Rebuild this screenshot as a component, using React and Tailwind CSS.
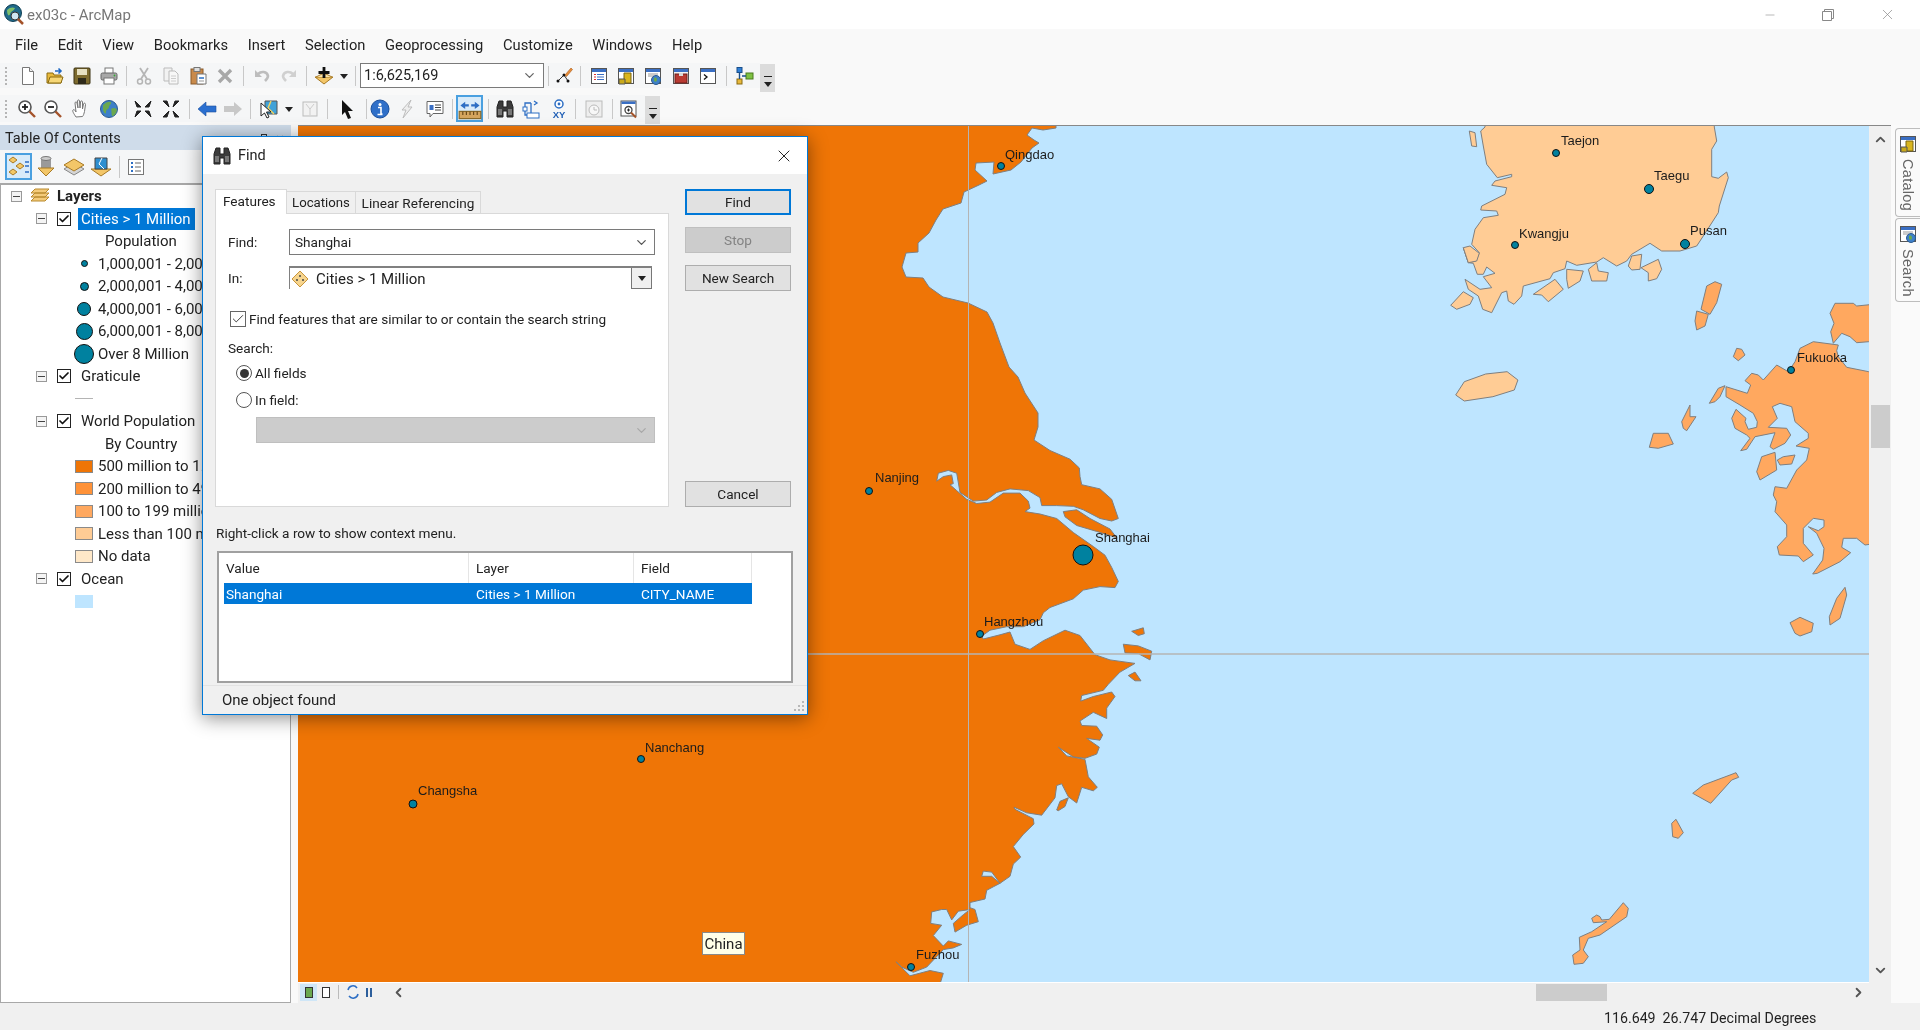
import React from 'react';
import { ChevronDown, ChevronLeft, ChevronRight, ChevronUp, Minus, X, Check } from 'lucide-react';

const P = (a, ox = 0, oy = 0, sx = 1, sy = 1) => {
  const o = [];
  for (let i = 0; i < a.length; i += 2) o.push(`${(ox + a[i] / sx).toFixed(1)},${(oy + a[i + 1] / sy).toFixed(1)}`);
  return o.join(' ');
};

const chinaNorth = [1056,118,1056,128,1043,130,1032,128,1027,135,1034,140,1039,143,1032,148,1021,162,1011,170,993,174,994,162,976,163,975,170,987,181,979,185,964,192,961,203,943,209,936,220,929,233,918,243,918,252,906,253,902,267,906,277,923,278,929,287,943,297,968,303,987,312,993,323,1000,343,1009,367,1018,377,1025,393,1038,413,1038,427,1034,440];
const chinaSouth = [720,30,780,55,808,80,810,105,815,128,870,140,905,170,925,225,905,232,870,225,820,200,790,190,740,188,695,188,690,165,655,145,600,140,560,150,530,172,490,175,450,150,440,95,415,87,385,95,380,118,400,105,425,100,430,125,420,128,440,145,470,170,500,182,540,178,580,152,630,152,655,175,660,195,645,205,690,212,740,225,790,265,850,305,885,330,905,365,925,405,915,423,870,420,820,430,790,455,720,480,700,495,690,515,640,535,590,535,540,545,515,562,520,570,570,558,600,550,615,585,660,600,700,575,765,545,810,560,855,615,900,630,975,640,930,665,895,700,880,717,815,732,812,748,850,735,905,722,915,735,890,768,890,798,850,780,810,805,815,818,860,820,878,845,870,860,830,855,868,880,860,900,825,912,790,908,745,880,770,905,825,915,835,965,862,995,850,1005,815,995,800,1040,775,1022,755,985,740,990,735,1025,695,1075,650,1068,612,1052,615,1058,670,1085,672,1100,640,1130,610,1165,632,1195,610,1215,600,1250,570,1270,545,1238,520,1235,515,1250,545,1250,570,1270,550,1280,530,1290,525,1315,480,1325,480,1340,495,1345,505,1380,470,1390,435,1410,430,1385,460,1360,480,1345,445,1350,425,1375,410,1345,395,1345,365,1352,362,1385,395,1390,370,1420,400,1450,415,1435,455,1445,430,1455,400,1460,350,1510,310,1525,275,1510,258,1495,300,1535,360,1520,400,1528,385,1575];
const chinaCorners = [280,990,280,118];

const z12 = [
  [760,205,800,200,840,225,900,255,920,280,860,262,800,245,765,220],
  [965,548,1000,538,1003,555,985,560],
  [940,585,985,590,1025,605,1020,630,985,612,945,610],
  [955,675,975,665,993,690,975,690],
  [740,1060,750,1035,775,1025,765,1050,745,1062],
];

const korea = [135,-20,135,3,122,15,130,60,140,115,172,155,215,145,215,152,165,165,155,178,200,185,195,205,125,240,122,252,170,255,175,268,130,275,105,310,95,355,118,380,108,405,85,410,70,365,85,410,100,412,112,445,130,445,140,423,165,442,130,452,155,485,120,490,75,460,85,490,115,510,128,550,155,560,185,500,200,495,205,525,222,535,245,510,250,480,330,458,340,440,375,428,380,405,410,418,470,408,490,395,530,420,560,405,575,385,630,352,665,375,720,375,770,360,790,330,835,260,838,240,865,155,860,138,835,157,815,152,815,70,830,45,823,3,823,-20];
const koreaIs = [
  [88,15,105,20,110,62,95,60],
  [70,365,90,360,118,382,110,405,85,410],
  [32,538,70,497,100,515,90,535,50,550],
  [280,505,345,460,370,490,325,527,305,507],
  [380,430,430,435,420,465,385,487,380,460],
  [445,430,470,410,475,435,505,440,500,465,455,465],
  [575,390,605,385,600,430,575,432,565,420],
  [603,425,655,400,665,430,650,458,625,465,625,440],
];
const tsushima = [
  [800,480,825,467,845,475,830,530,810,565,783,550],
  [770,555,805,565,795,600,770,612,765,585],
];
const kyushu = [710,245,686,245,620,232,595,200,590,182,595,165,520,155,480,175,465,215,445,245,410,225,370,270,355,255,335,250,315,272,332,285,322,310,258,290,258,320,300,345,340,370,352,395,350,412,325,418,315,395,318,385,288,358,275,385,285,415,320,435,330,445,302,482,320,478,345,440,405,428,390,470,400,478,435,460,452,435,440,415,385,412,412,385,397,350,420,340,455,350,465,395,505,430,505,445,468,468,508,475,500,510,470,540,440,595,405,590,400,615,410,635,405,665,440,705,440,740,412,770,418,795,475,798,490,815,520,795,490,760,490,715,520,685,552,690,552,710,535,722,505,710,530,730,552,775,548,810,518,852,532,850,600,815,632,788,605,772,610,745,650,745,675,765,710,760];
const japanIs = [
  [710,155,686,155,650,158,630,140,605,130,580,160,572,125,582,100,570,70,585,40,640,40,650,48,710,42],
  [280,200,290,175,305,178,315,195,295,212],
  [208,340,235,295,255,287,240,320,225,335],
  [125,395,150,345,150,380,168,380,140,422,130,415],
  [28,472,40,430,85,430,100,462,55,475],
  [350,545,365,500,405,487,410,540,360,570],
  [412,510,430,500,465,495,455,522,420,525],
  [568,980,590,925,615,892,620,915,600,985,570,1005],
  [450,998,480,982,520,1000,515,1025,480,1038,465,1030],
];
const south = [
  [578,280,610,255,690,225,708,218,716,232,695,240,632,310],
  [515,370,528,358,550,398,535,415,518,410],
  [238,712,275,695,320,665,280,668,275,655,290,645,300,650,305,660,328,658,370,608,385,625,380,650,300,705,265,715,250,750,265,770,250,790,222,793,218,765,240,750],
];
const jeju = [918,825,930,785,960,762,990,755,1005,780,1000,810,970,830,930,843];

const cities = [
  ['Qingdao', 1005, 159, 1001, 166, 3.5], ['Taejon', 1561, 145, 1556, 153, 3.5], ['Taegu', 1654, 180, 1649, 189, 4.5],
  ['Kwangju', 1519, 238, 1515, 245, 3.5], ['Pusan', 1690, 235, 1685, 244, 4.5], ['Fukuoka', 1797, 362, 1791, 370, 3.5],
  ['Nanjing', 875, 482, 869, 491, 3.5], ['Shanghai', 1095, 542, 1083, 555, 10], ['Hangzhou', 984, 626, 980, 634, 3.5],
  ['Nanchang', 645, 752, 641, 759, 3.5], ['Changsha', 418, 795, 413, 804, 4], ['Fuzhou', 916, 959, 911, 967, 3.5],
];

function MapView() {
  const line = { stroke: '#7f7f7f', strokeWidth: 1, strokeLinejoin: 'round' };
  return (
    <svg viewBox="298 126 1571 856" className="w-full h-full block bg-[#bee5ff]">
      <polygon points={`${P(chinaNorth)} ${P(chinaSouth, 810, 440, 3, 2.865)} ${P(chinaCorners)}`} fill="#ef7506" {...line} />
      {z12.map((p, i) => <polygon key={i} points={P(p, 810, 440, 3, 2.865)} fill="#ef7506" {...line} />)}
      <polygon points={P(korea, 1440, 126, 3, 3)} fill="#ffcc95" {...line} />
      {koreaIs.map((p, i) => <polygon key={i} points={P(p, 1440, 126, 3, 3)} fill="#ffcc95" {...line} />)}
      <polygon points={P(jeju, 800, 120, 1.4, 3)} fill="#ffcc95" {...line} />
      {tsushima.map((p, i) => <polygon key={i} points={P(p, 1440, 126, 3, 3)} fill="#ffa85f" {...line} />)}
      <polygon points={P(kyushu, 1640, 290, 3, 3)} fill="#ffa85f" {...line} />
      {japanIs.map((p, i) => <polygon key={i} points={P(p, 1640, 290, 3, 3)} fill="#ffa85f" {...line} />)}
      {south.map((p, i) => <polygon key={i} points={P(p, 1500, 700, 3, 3)} fill="#ffa85f" {...line} />)}
      <line x1="968.5" y1="126" x2="968.5" y2="982" stroke="#b4b4b4" strokeWidth="1" />
      <line x1="298" y1="654" x2="1869" y2="654" stroke="#b4b4b4" strokeWidth="1.3" />
      {cities.map(([n, tx, ty, cx, cy, r]) => (
        <g key={n}>
          <circle cx={cx} cy={cy} r={r} fill="#00819f" stroke="#111" strokeWidth="1" />
          <text x={tx} y={ty} fontSize="13" fill="#1c1c1c" fontFamily="'Liberation Sans', sans-serif">{n}</text>
        </g>
      ))}
    </svg>
  );
}

const I = ({ children, s = 20 }) => <svg width={s} height={s} viewBox="0 0 20 20" className="shrink-0">{children}</svg>;
const Zoomer = ({ plus }) => (
  <I>
    <circle cx="8" cy="8" r="6" fill="#fff" stroke="#555" strokeWidth="1.6" />
    <path d="M5 8h6" stroke="#222" strokeWidth="1.8" />
    {plus && <path d="M8 5v6" stroke="#222" strokeWidth="1.8" />}
    <path d="M12.5 12.5l5.5 5.5" stroke="#a4532a" strokeWidth="2.4" />
  </I>
);
const WinIcon = ({ children }) => (
  <I>
    <rect x="2.5" y="2.5" width="15" height="15" fill="#fff" stroke="#555" />
    <rect x="3" y="3" width="14" height="3" fill="#3a6fc4" />
    {children}
  </I>
);
const Globe = () => (
  <I>
    <circle cx="10" cy="10" r="8.5" fill="#3d7fc8" stroke="#2a5a90" />
    <path d="M4 6c3-3 6-4 8-3 1 2-2 3-2 5s-3 2-3 5-2 1-3-2zM12 10c3-2 5-1 6 1-1 4-3 6-5 6-1-3 0-4-1-7z" fill="#6aa84f" />
  </I>
);
const Diamond = ({ s = 20 }) => (
  <I s={s}>
    <path d="M10 2l8 8-8 8-8-8z" fill="#f7d58e" stroke="#c9953b" />
    <circle cx="10" cy="7" r="1" fill="#444" /><circle cx="7" cy="11" r="1" fill="#444" /><circle cx="13" cy="11" r="1" fill="#444" />
  </I>
);

const icons = {
  new: <I><path d="M4.5 1.5h7l4 4v13h-11z" fill="#fff" stroke="#777" /><path d="M11.5 1.5v4h4" fill="#eee" stroke="#777" /></I>,
  open: <I><path d="M2 7h6l1 2h7v8H2z" fill="#e8b93c" stroke="#8a6a10" /><path d="M3 17l2-6h13l-2 6z" fill="#f6d777" stroke="#8a6a10" /><path d="M10 5h6M13.5 2.5L16 5l-2.500 2.500" fill="none" stroke="#1f68c4" strokeWidth="1.600" /></I>,
  save: <I><rect x="2" y="2" width="16" height="16" rx="1" fill="#7d6b2f" stroke="#3c3312" /><rect x="5" y="3" width="10" height="6" fill="#e6e0c2" /><rect x="6" y="12" width="8" height="6" fill="#2e2a1a" /></I>,
  print: <I><rect x="6" y="2" width="8" height="6" fill="#fff" stroke="#777" /><rect x="2" y="7" width="16" height="7" rx="1.500" fill="#a8a8a8" stroke="#666" /><rect x="5" y="12" width="10" height="6" fill="#fff" stroke="#777" /><circle cx="15.500" cy="9.500" r="0.900" fill="#3a3" /></I>,
  cut: <I><path d="M6 2l7 11M14 2L7 13" stroke="#b5b5b5" strokeWidth="1.800" /><circle cx="6" cy="15.500" r="2.500" fill="none" stroke="#b5b5b5" strokeWidth="1.500" /><circle cx="14" cy="15.500" r="2.500" fill="none" stroke="#b5b5b5" strokeWidth="1.500" /></I>,
  copy: <I><path d="M3 2h8v13H3z" fill="#f2f2f2" stroke="#bbb" /><path d="M8 5h6l3 3v10H8z" fill="#f7f7f7" stroke="#bbb" /><path d="M10 10h5M10 12.500h5M10 15h5" stroke="#ccc" /></I>,
  paste: <I><rect x="3" y="3" width="12" height="15" fill="#c98a4b" stroke="#8a5a2a" /><rect x="6" y="1.500" width="6" height="4" fill="#ddd" stroke="#777" /><path d="M9 8h9v10H9z" fill="#fff" stroke="#777" /><path d="M11 12h5" stroke="#2a6fc4" strokeWidth="1.500" /><path d="M11 15h5" stroke="#999" /></I>,
  del: <I><path d="M4 4l12 12M16 4L4 16" stroke="#a8a8a8" strokeWidth="3.400" /></I>,
  undo: <I><path d="M6 8c3-3 9-3 10 2 0 2-1 3-3 5" fill="none" stroke="#bdbdbd" strokeWidth="2.600" /><path d="M3 4v7h7z" fill="#bdbdbd" /></I>,
  redo: <I><path d="M14 8c-3-3-9-3-10 2 0 2 1 3 3 5" fill="none" stroke="#d0d0d0" strokeWidth="2.600" /><path d="M17 4v7h-7z" fill="#d0d0d0" /></I>,
  add: <I><path d="M10 18l-9-7h18z" fill="#f3c668" stroke="#a87a25" /><path d="M2 11l8-4 8 4" fill="#fae4ad" stroke="#a87a25" /><path d="M10 1v11M4.500 6.500h11" stroke="#111" strokeWidth="2.800" /></I>,
  edit: <I><path d="M4 15l6-6 4 6" fill="none" stroke="#333" /><circle cx="4" cy="15" r="1.500" fill="#111" /><circle cx="10" cy="9" r="1.500" fill="#111" /><circle cx="14" cy="15" r="1.500" fill="#111" /><path d="M11 9l6-7 1.500 1.500-6 7z" fill="#e88d3a" stroke="#a85a1a" strokeWidth="0.600" /></I>,
  toc: <WinIcon><path d="M5 8.500h2M5 11h2M5 13.500h2" stroke="#d33" /><path d="M8 8.500h7M8 11h7M8 13.500h7" stroke="#3a6fc4" strokeWidth="1.200" /></WinIcon>,
  cat: <WinIcon><path d="M8 7h7v10H8z" fill="#d9b51e" stroke="#7a6410" /><path d="M3 13h6v5H3z" fill="#c9a91a" stroke="#555" /></WinIcon>,
  search: <WinIcon><path d="M5 8h10M5 10h6" stroke="#999" /><circle cx="13" cy="14" r="4.500" fill="#3d7fc8" stroke="#2a5a90" /><path d="M11 12c2-1 3 0 3 2s-2 2-3 1z" fill="#6aa84f" /></WinIcon>,
  box: <I><rect x="2.500" y="2.500" width="15" height="15" fill="#f2f2f2" stroke="#555" /><rect x="3" y="3" width="14" height="3" fill="#3a6fc4" /><rect x="4" y="8" width="12" height="9" fill="#b93a32" stroke="#6e1f1a" /><rect x="8" y="7" width="4" height="3" fill="#d9d9d9" /></I>,
  py: <WinIcon><path d="M6 8.500l3 2.500-3 2.500" fill="none" stroke="#111" strokeWidth="1.300" /></WinIcon>,
  model: <I><rect x="2" y="1.500" width="5" height="5" fill="#2f7fd6" stroke="#1a4f8a" /><rect x="11" y="7" width="7" height="6" fill="#7ec142" stroke="#4a7a1f" /><rect x="2" y="13" width="5" height="5" fill="#e8b93c" stroke="#8a6a10" /><path d="M4.500 6.500v6.500M7 10h4" stroke="#1a4f8a" strokeWidth="1.400" /></I>,
  zin: <Zoomer plus />,
  zout: <Zoomer />,
  pan: <I><path d="M5 18c-2-3-4-6-3-7s2 0 3 2L4 4c0-1.500 2-1.500 2 0l1 5-.500-7c0-1.500 2-1.500 2 0l.500 7 .500-6c0-1.500 2-1.500 2 0l0 7 1-5c.500-1.500 2-1 2 .500l-1 7c-.500 2-1 4-2 5z" fill="#fff" stroke="#777" /></I>,
  globe: <Globe />,
  fin: <I><path d="M2 2l6 6H4zM18 2l-6 6h4zM2 18l6-6H4zM18 18l-6-6h4z" fill="#222" stroke="#222" /></I>,
  fout: <I><path d="M8 8L2 2h4zM12 8l6-6h-4zM8 12l-6 6h4zM12 12l6 6h-4z" fill="#222" stroke="#222" /></I>,
  back: <I><path d="M1 10l8-7v4h10v6H9v4z" fill="#2a6fd0" stroke="#1b4f9c" strokeWidth="0.600" /></I>,
  fwd: <I><path d="M19 10l-8-7v4H1v6h10v4z" fill="#c8c8c8" /></I>,
  select: <I><path d="M6 2h12v13H6z" fill="#41a2d8" stroke="#555" /><path d="M12 2l-3 7 6 6" fill="none" stroke="#f0d060" strokeWidth="1.500" /><path d="M2 4l0 13 3.500-3 2.500 5 2-1-2.500-5h4.500z" fill="#fff" stroke="#222" /></I>,
  clear: <I><rect x="3" y="3" width="14" height="14" fill="#f2f2f2" stroke="#bbb" /><path d="M6 5l4 5 4-5M10 10v6" fill="none" stroke="#ccc" /></I>,
  arrow: <I><path d="M5 1l11 11h-5l3 7-3 1-3-7-3 3z" fill="#111" /></I>,
  info: <I><circle cx="10" cy="10" r="9" fill="#2f6fc8" stroke="#1b4f9c" /><circle cx="10" cy="5.500" r="1.500" fill="#fff" /><path d="M8 8.500h3v6.500h1.500M7.500 15.500h5" fill="none" stroke="#fff" strokeWidth="1.600" /></I>,
  bolt: <I><path d="M14 1L5 11h4l-3 8 9-11h-4z" fill="#eee" stroke="#bdbdbd" /></I>,
  popup: <I><path d="M2 2.500h16v12H8l-3 3.500v-3.500H2z" fill="#fff" stroke="#666" /><path d="M4.500 6h4v5h-4z" fill="#3a6fc4" /><path d="M10 6h6M10 8.500h6M10 11h6" stroke="#444" /></I>,
  measure: <I s={24}><path d="M2 7l4-3v2h3v2H6v2zM18 7l-4-3v2h-3v2h3v2z" fill="#2d6ec4" /><rect x="1" y="12" width="18" height="6" fill="#d5a55e" stroke="#8a6a2a" /><path d="M4 12v3M7 12v3M10 12v3M13 12v3M16 12v3" stroke="#6a4a1a" /></I>,
  bino: <I><path d="M2 18V8l2-6h4v6h4V2h4l2 6v10h-6v-6H8v6z" fill="#3b3b3b" stroke="#222" /><path d="M3 10h4v6H3zM13 10h4v6h-4z" fill="#777" /></I>,
  route: <I><rect x="2" y="8" width="4" height="4" fill="#fff" stroke="#2d6ec4" /><rect x="6" y="14" width="12" height="5" fill="#fff" stroke="#2d6ec4" /><path d="M4 8V4h6M4 12v4h2M10 4v10M13 2l3 2-3 2" fill="none" stroke="#2d6ec4" strokeWidth="1.300" /></I>,
  xy: <I><circle cx="10" cy="5" r="4" fill="#fff" stroke="#2d6ec4" strokeWidth="1.500" /><circle cx="10" cy="5" r="1.400" fill="#2d6ec4" /><text x="10" y="19" textAnchor="middle" fontSize="9.500" fontWeight="700" fill="#1f5eb5" fontFamily="'Liberation Sans',sans-serif">XY</text></I>,
  time: <I><rect x="2" y="2" width="16" height="16" fill="#eee" stroke="#bbb" /><circle cx="10" cy="11" r="5" fill="#f7f7f7" stroke="#bbb" /><path d="M10 8v3h3" fill="none" stroke="#bbb" /></I>,
  viewer: <I><rect x="2" y="2" width="15" height="15" fill="#fff" stroke="#555" /><rect x="2.500" y="2.500" width="14" height="2.500" fill="#3a6fc4" /><circle cx="9.500" cy="11" r="3.500" fill="#fff" stroke="#444" strokeWidth="1.300" /><path d="M8 11h3M9.500 9.500v3" stroke="#222" /><path d="M12 13.500l5 5" stroke="#a4532a" strokeWidth="2" /></I>,
};

const Cell = ({ n, w = 'w-[27px]' }) => <div className={`${w} h-full flex items-center justify-center shrink-0`}>{icons[n]}</div>;
const Sep = ({ w = 'w-[9px]' }) => <div className={`${w} h-full flex items-center justify-center shrink-0`}><div className="w-px h-[20px] bg-[#c8c8c8]" /></div>;
const Grip = () => <div className="w-[8px] h-[18px] ml-[5px] mr-[1px] shrink-0 border-l-2 border-dotted border-[#b5b5b5]" />;
const Caret = () => <svg width="10" height="10" viewBox="0 0 10 10" className="shrink-0"><path d="M1 3h8L5 8z" fill="#222" /></svg>;
const More = () => (
  <div className="w-[15px] h-[28px] mt-[1px] bg-[#dcdcdc] flex flex-col items-center justify-end pb-[3px] shrink-0">
    <div className="w-[8px] h-px bg-[#222] mb-[2px]" />
    <Caret />
  </div>
);

const Toolbars = () => (
  <div className="h-[65px] pt-[3px] shrink-0">
    <div className="flex items-start h-[32px]">
      <div className="flex items-center h-[25px] w-[760px] bg-[#f5f6f7]">
        <Grip /><Cell n="new" /><Cell n="open" /><Cell n="save" /><Cell n="print" /><Sep w="w-[8px]" />
        <Cell n="cut" /><Cell n="copy" /><Cell n="paste" /><Cell n="del" /><Sep w="w-[10px]" />
        <Cell n="undo" /><Cell n="redo" /><Sep w="w-[9px]" />
        <Cell n="add" w="w-[26px]" /><div className="w-[14px] flex justify-center"><Caret /></div><Sep w="w-[10px]" />
        <div className="w-[184px] h-[25px] bg-white border border-[#7a7a7a] flex items-center justify-between pl-[3px] pr-[6px] text-[14.5px] text-[#222] shrink-0">
          1:6,625,169<ChevronDown size={15} color="#666" />
        </div>
        <Sep w="w-[8px]" /><Cell n="edit" w="w-[24px]" /><Sep w="w-[9px]" />
        <Cell n="toc" /><Cell n="cat" /><Cell n="search" w="w-[28px]" /><Cell n="box" w="w-[27px]" /><Cell n="py" w="w-[28px]" /><Sep w="w-[8px]" /><Cell n="model" w="w-[30px]" />
      </div>
      <More />
    </div>
    <div className="flex items-start h-[27px]">
      <div className="flex items-center h-[27px] w-[645px] bg-[#f5f6f7]">
        <Grip /><Cell n="zin" w="w-[25px]" /><Cell n="zout" w="w-[28px]" /><Cell n="pan" w="w-[28px]" /><Cell n="globe" w="w-[28px]" /><Sep w="w-[6px]" />
        <Cell n="fin" w="w-[28px]" /><Cell n="fout" w="w-[27px]" /><Sep w="w-[10px]" />
        <Cell n="back" w="w-[26px]" /><Cell n="fwd" w="w-[25px]" /><Sep w="w-[10px]" />
        <Cell n="select" w="w-[28px]" /><div className="w-[12px] flex justify-center"><Caret /></div><Cell n="clear" w="w-[30px]" /><Sep w="w-[4px]" />
        <Cell n="arrow" w="w-[36px]" /><Sep w="w-[2px]" />
        <Cell n="info" w="w-[26px]" /><Cell n="bolt" w="w-[28px]" /><Cell n="popup" w="w-[27px]" /><Sep w="w-[8px]" />
        <div className="w-[27px] h-[27px] border-2 border-[#4aa0e0] bg-[#d9ebf9] flex items-center justify-center shrink-0">{icons.measure}</div><Sep w="w-[10px]" />
        <Cell n="bino" w="w-[24px]" /><Cell n="route" w="w-[28px]" /><Cell n="xy" w="w-[28px]" /><Sep w="w-[5px]" />
        <Cell n="time" w="w-[32px]" /><Sep w="w-[5px]" /><Cell n="viewer" w="w-[28px]" />
      </div>
      <More />
    </div>
  </div>
);

const Exp = () => <span className="w-[11px] h-[11px] border border-[#999] bg-[#f4f4f4] flex items-center justify-center shrink-0"><span className="w-[7px] h-px bg-[#444]" /></span>;
const Chk = () => <span className="w-[14px] h-[14px] border border-[#222] bg-white flex items-center justify-center shrink-0"><Check size={12} strokeWidth={3.5} color="#111" /></span>;
const LayerRow = ({ label, sel }) => (
  <div className="h-[22.5px] flex items-center pl-[35px] shrink-0">
    <Exp /><span className="w-[10px]" /><Chk />
    <span className={`ml-[7px] px-[3px] h-[22px] flex items-center whitespace-nowrap ${sel ? 'bg-[#0078d7] text-white w-[117px]' : ''}`}>{label}</span>
  </div>
);
const Legend = ({ sym, label }) => (
  <div className="h-[22.5px] flex items-center shrink-0 whitespace-nowrap">
    <span className="w-[73px] shrink-0" />
    <span className="w-[20px] shrink-0 flex items-center justify-center">{sym}</span>
    <span className="ml-[4px]">{label}</span>
  </div>
);
const Dot = ({ r }) => <span style={{ width: r * 2, height: r * 2 }} className="rounded-full bg-[#00819f] border border-[#111] block" />;
const Sw = ({ c }) => <span style={{ background: c }} className="w-[18px] h-[13px] border border-[#8a8a8a] block" />;
const Sub = ({ t }) => <div className="h-[22.5px] flex items-center pl-[104px] shrink-0">{t}</div>;

const Toc = () => (
  <div className="w-[291px] h-full shrink-0 flex flex-col">
    <div className="h-[25px] bg-[#cfdcea] flex items-center justify-between pl-[5px] pr-[6px] pt-[2px] shrink-0">
      <span>Table Of Contents</span>
      <span className="flex items-center gap-[8px] text-[#333]"><span className="w-[6px] h-[9px] border border-[#333]" /><X size={10} strokeWidth={3} /></span>
    </div>
    <div className="h-[33px] bg-[#f5f6f7] flex items-center shrink-0 pl-[5px]">
      <div className="w-[27px] h-[27px] border-2 border-[#4aa0e0] bg-[#d9ebf9] flex items-center justify-center shrink-0">
        <svg width="22" height="22" viewBox="0 0 22 22"><path d="M5 1l4 3-4 3-4-3zM12 7l4 3-4 3-4-3zM5 13l4 3-4 3-4-3z" fill="#f4c866" stroke="#a87a25" /><path d="M17 6h4M17 10h4M17 16h4" stroke="#2d6ec4" strokeWidth="1.500" /></svg>
      </div>
      <div className="w-[28px] flex justify-center">
        <svg width="20" height="24" viewBox="0 0 20 24"><path d="M5 3h10v10H5z" fill="#9a9a9a" /><ellipse cx="10" cy="3.500" rx="5" ry="2" fill="#ccc" stroke="#777" /><path d="M2 13h16l-8 8z" fill="#f3c668" stroke="#a87a25" /></svg>
      </div>
      <div className="w-[27px] flex justify-center">
        <svg width="22" height="22" viewBox="0 0 22 22"><path d="M1 13l10-6 10 6-10 6z" fill="#d5d5d5" stroke="#888" /><path d="M1 9l10-6 10 6-10 6z" fill="#f3c668" stroke="#a87a25" /></svg>
      </div>
      <div className="w-[28px] flex justify-center">
        <svg width="22" height="22" viewBox="0 0 22 22"><path d="M1 13l10 7 10-7z" fill="#f3c668" stroke="#a87a25" /><path d="M5 2h12v11H5z" fill="#2f8fd0" stroke="#444" /><path d="M12 2l-3 6 5 5" fill="none" stroke="#fff" /></svg>
      </div>
      <div className="w-[1px] h-[22px] bg-[#c8c8c8] ml-[4px]" />
      <div className="w-[31px] flex justify-center">
        <svg width="18" height="18" viewBox="0 0 18 18"><rect x="1.500" y="1.500" width="15" height="15" fill="#fff" stroke="#777" /><path d="M4 5h2M4 9h2M4 13h2" stroke="#2d6ec4" strokeWidth="2" /><path d="M8 5h6M8 9h6M8 13h6" stroke="#666" /></svg>
      </div>
    </div>
    <div className="flex-1 bg-white border-t-2 border-l border-r border-b border-[#a8a8a8] overflow-hidden text-[15px] leading-[18px]">
      <div className="h-[22.5px] flex items-center pl-[10px] shrink-0">
        <Exp /><span className="w-[8px]" />
        <svg width="20" height="18" viewBox="0 0 20 18" className="shrink-0"><path d="M1 14h14l4-4H5zM1 10h14l4-4H5zM1 6h14l4-4H5z" fill="#f4cb7a" stroke="#b98a2e" /></svg>
        <span className="ml-[7px] font-bold">Layers</span>
      </div>
      <LayerRow label="Cities > 1 Million" sel />
      <Sub t="Population" />
      <Legend sym={<Dot r={3.5} />} label="1,000,001 - 2,000,000" />
      <Legend sym={<Dot r={4.5} />} label="2,000,001 - 4,000,000" />
      <Legend sym={<Dot r={7} />} label="4,000,001 - 6,000,000" />
      <Legend sym={<Dot r={8.5} />} label="6,000,001 - 8,000,000" />
      <Legend sym={<Dot r={10} />} label="Over 8 Million" />
      <LayerRow label="Graticule" />
      <Legend sym={<span className="w-[18px] h-px bg-[#b4b4b4] block" />} label="" />
      <LayerRow label="World Population" />
      <Sub t="By Country" />
      <Legend sym={<Sw c="#ef7506" />} label="500 million to 1.3 billion" />
      <Legend sym={<Sw c="#ff9238" />} label="200 million to 499 million" />
      <Legend sym={<Sw c="#ffa85f" />} label="100 to 199 million" />
      <Legend sym={<Sw c="#ffcc95" />} label="Less than 100 million" />
      <Legend sym={<Sw c="#ffe8c8" />} label="No data" />
      <LayerRow label="Ocean" />
      <Legend sym={<span className="w-[18px] h-[13px] bg-[#bee5ff] block" />} label="" />
    </div>
  </div>
);

const Btn = ({ children, cls = 'bg-[#e1e1e1] border border-[#adadad] text-[#222]' }) => (
  <div className={`w-[106px] h-[26px] flex items-center justify-center shrink-0 ${cls}`}>{children}</div>
);

const Dialog = () => (
  <div className="absolute left-[202px] top-[136px] w-[606px] h-[579px] z-10 border border-[#0078d7] bg-[#f0f0f0] shadow-[0_3px_18px_rgba(0,0,0,0.45)] flex flex-col text-[#222] text-[13.6px] leading-[18px]">
    <div className="h-[37px] bg-white flex items-center justify-between pl-[9px] pr-[13px] shrink-0">
      <span className="flex items-center gap-[6px]">{icons.bino}<span className="text-[14.5px]">Find</span></span>
      <X size={20} strokeWidth={1.1} color="#111" />
    </div>
    <div className="flex pl-[12px] pt-[14px] shrink-0">
      <div className="w-[454px] shrink-0">
        <div className="flex items-end h-[25px]">
          <div className="w-[72px] h-[25px] bg-white border-t border-l border-r border-[#d9d9d9] flex items-center pl-[7px] pb-[3px] relative z-[1] -mb-px">Features</div>
          <div className="w-[69px] h-[22px] border-t border-r border-[#d9d9d9] flex items-center justify-center text-[13.2px]">Locations</div>
          <div className="w-[125px] h-[22px] border-t border-r border-[#d9d9d9] flex items-center justify-center">Linear Referencing</div>
        </div>
        <div className="h-[294px] bg-white border border-[#d9d9d9] pl-[12px] pt-[15px]">
          <div className="flex items-center h-[26px]">
            <span className="w-[61px] shrink-0">Find:</span>
            <div className="w-[366px] h-[26px] border border-[#7a7a7a] flex items-center justify-between pl-[5px] pr-[5px]">Shanghai<ChevronDown size={15} color="#555" /></div>
          </div>
          <div className="flex items-center h-[23px] mt-[11px]">
            <span className="w-[61px] shrink-0">In:</span>
            <div className="w-[363px] h-[23px] border-t-2 border-l border-[#808080] flex items-center bg-white">
              <Diamond s={20} /><span className="ml-[6px] flex-1 text-[15px]">Cities &gt; 1 Million</span>
              <div className="w-[21px] h-full bg-[#f0f0f0] border border-[#777] border-t-0 flex items-center justify-center"><Caret /></div>
            </div>
          </div>
          <div className="flex items-center h-[16px] mt-[22px] ml-[2px]">
            <span className="w-[16px] h-[16px] border border-[#666] flex items-center justify-center shrink-0"><Check size={14} strokeWidth={1.6} color="#333" /></span>
            <span className="ml-[3px] whitespace-nowrap">Find features that are similar to or contain the search string</span>
          </div>
          <div className="h-[18px] mt-[12px] flex items-center">Search:</div>
          <div className="flex items-center h-[18px] mt-[7px] ml-[8px]">
            <span className="w-[16px] h-[16px] rounded-full border border-[#555] flex items-center justify-center shrink-0"><span className="w-[9px] h-[9px] rounded-full bg-[#333]" /></span>
            <span className="ml-[3px]">All fields</span>
          </div>
          <div className="flex items-center h-[18px] mt-[9px] ml-[8px]">
            <span className="w-[16px] h-[16px] rounded-full border border-[#555] shrink-0" />
            <span className="ml-[3px]">In field:</span>
          </div>
          <div className="w-[399px] h-[26px] mt-[8px] ml-[28px] bg-[#cccccc] border border-[#bfbfbf] flex items-center justify-end pr-[5px]"><ChevronDown size={15} color="#a8a8a8" /></div>
        </div>
      </div>
      <div className="ml-[16px] pt-px flex flex-col gap-[12px]">
        <Btn cls="bg-[#e1e1e1] border-2 border-[#0078d7] text-[#222]">Find</Btn>
        <Btn cls="bg-[#cccccc] border border-[#bfbfbf] text-[#838383]">Stop</Btn>
        <Btn>New Search</Btn>
        <div className="h-[166px]" />
        <Btn>Cancel</Btn>
      </div>
    </div>
    <div className="h-[20px] mt-[16px] pl-[13px] flex items-center shrink-0">Right-click a row to show context menu.</div>
    <div className="w-[576px] h-[132px] mt-[8px] ml-[14px] border-2 border-[#a0a0a0] bg-white pl-[5px] shrink-0">
      <div className="flex h-[30px] w-[528px]">
        <div className="w-[245px] border-r border-[#e5e5e5] flex items-center pl-[2px]">Value</div>
        <div className="w-[165px] border-r border-[#e5e5e5] flex items-center pl-[7px]">Layer</div>
        <div className="w-[118px] border-r border-[#e5e5e5] flex items-center pl-[7px]">Field</div>
      </div>
      <div className="flex h-[21px] w-[528px] bg-[#0078d7] text-white items-center">
        <div className="w-[245px] pl-[2px]">Shanghai</div>
        <div className="w-[165px] pl-[7px]">Cities &gt; 1 Million</div>
        <div className="w-[118px] pl-[7px]">CITY_NAME</div>
      </div>
    </div>
    <div className="flex-1 mt-[2px] border-t border-[#e3e3e3] pl-[19px] flex items-center justify-between pr-[2px]">
      <span className="text-[15px]">One object found</span>
      <svg width="12" height="12" viewBox="0 0 12 12" className="self-end mb-[2px]"><path d="M9 1h2v2H9zM5 5h2v2H5zM9 5h2v2H9zM1 9h2v2H1zM5 9h2v2H5zM9 9h2v2H9z" fill="#b8b8b8" /></svg>
    </div>
  </div>
);

const Dock = ({ icon, label, cls }) => (
  <div className={`w-[25px] border border-r-0 border-[#bdbdbd] rounded-l-[4px] bg-[#fafafa] flex flex-col items-center pt-[5px] gap-[5px] shrink-0 ${cls}`}>
    {icon}
    <span className="[writing-mode:vertical-rl] text-[14.5px] leading-[18px] text-[#666] font-['Liberation_Sans',sans-serif] tracking-[0.3px]">{label}</span>
  </div>
);

export default function App() {
  return (
    <div className="relative w-[1920px] h-[1030px] overflow-hidden bg-[#f9f9f9] flex flex-col font-['Roboto',sans-serif] text-[14.5px] leading-[18px] text-[#222] blur-[0.5px]">
      <div className="h-[29px] bg-white flex items-center justify-between shrink-0 pl-[3px] pr-[24px]">
        <div className="flex items-center gap-[2px]">
          <svg width="22" height="22" viewBox="0 0 22 22"><circle cx="10" cy="9" r="8.500" fill="#1f6a8a" stroke="#0f3f55" /><path d="M4 6c3-3 6-3 8-2-1 3-4 3-5 6s-3 1-3-4z" fill="#7fbf6a" /><circle cx="12" cy="12" r="4" fill="#cfe6f2" stroke="#333" /><path d="M15 15l5 5" stroke="#a4532a" strokeWidth="2.500" /></svg>
          <span className="text-[15px] text-[#777]">ex03c - ArcMap</span>
        </div>
        <div className="flex items-center gap-[44px] text-[#888]">
          <Minus size={14} strokeWidth={1} />
          <svg width="14" height="14" viewBox="0 0 14 14"><path d="M1.500 3.500h9v9h-9zM3.500 3.500v-2h9v9h-2" fill="none" stroke="#888" /></svg>
          <X size={17} strokeWidth={1} />
        </div>
      </div>
      <div className="h-[31px] flex items-center gap-[19.7px] pl-[15px] shrink-0 text-[14.7px]">
        {['File', 'Edit', 'View', 'Bookmarks', 'Insert', 'Selection', 'Geoprocessing', 'Customize', 'Windows', 'Help'].map(m => <span key={m}>{m}</span>)}
      </div>
      <Toolbars />
      <div className="flex-1 min-h-0 flex">
        <Toc />
        <div className="w-[7px] shrink-0" />
        <div className="w-[1571px] shrink-0 flex flex-col border-t-0">
          <div className="h-[1px] bg-[#888] shrink-0" />
          <div className="h-[856px] shrink-0"><MapView /></div>
          <div className="flex-1 bg-[#f0f0f0] flex items-center relative border-t border-white pb-[2px]">
            <div className="w-[17px] h-[17px] ml-[2px] bg-[#cfe6f7] flex items-center justify-center"><span className="w-[8px] h-[11px] bg-[#6aa84f] border border-[#333]" /></div>
            <div className="w-[18px] flex justify-center"><span className="w-[8px] h-[11px] bg-white border border-[#333]" /></div>
            <div className="w-px h-[14px] bg-[#bbb] mx-[3px]" />
            <svg width="16" height="14" viewBox="0 0 16 14" className="ml-[3px]"><path d="M3 5a5 5 0 019-2M13 9a5 5 0 01-9 2" fill="none" stroke="#2d6ec4" strokeWidth="1.500" /></svg>
            <div className="ml-[5px] flex gap-[2px]"><span className="w-[2px] h-[9px] bg-[#2d5f9c]" /><span className="w-[2px] h-[9px] bg-[#2d5f9c]" /></div>
            <ChevronLeft size={15} strokeWidth={3} color="#555" className="ml-[19px]" />
            <div className="flex-1" />
            <div className="w-[71px] h-[17px] bg-[#cccccc]" />
            <div className="w-[262px] flex justify-end pr-[3px]"><ChevronRight size={15} strokeWidth={3} color="#555" /></div>
          </div>
        </div>
        <div className="w-[22px] shrink-0 bg-[#f0f0f0] border-t border-[#888] flex flex-col items-center relative">
          <ChevronUp size={15} strokeWidth={3} color="#555" className="mt-[6px]" />
          <div className="w-[19px] h-[43px] bg-[#cccccc] mt-[258px]" />
          <div className="flex-1" />
          <ChevronDown size={15} strokeWidth={3} color="#555" className="mb-[25px]" />
        </div>
        <div className="flex-1 bg-[#fafafa] pt-[3px] pl-[4px] flex flex-col gap-[1px]">
          <Dock cls="h-[89px]" icon={icons.cat} label="Catalog" />
          <Dock cls="h-[84px]" icon={icons.search} label="Search" />
        </div>
      </div>
      <div className="h-[27px] pt-[3px] bg-[#f0f0f0] shrink-0 flex items-center pl-[1604px] text-[14.2px] whitespace-pre">116.649  26.747 Decimal Degrees</div>
      <Dialog />
      <div className="absolute left-[702px] top-[932px] w-[43px] h-[23px] bg-[#ffffe8] border border-[#8a8a8a] flex items-center justify-center text-[15px] z-[5]">China</div>
    </div>
  );
}
